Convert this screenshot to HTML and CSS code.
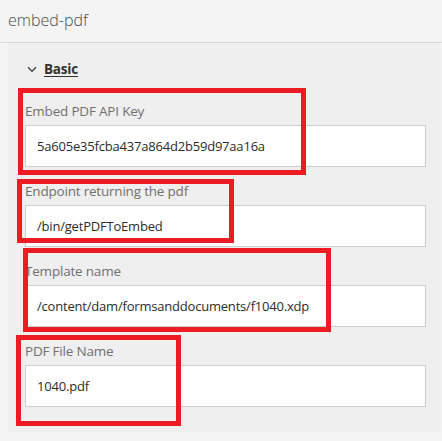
FILE: index.html
```html
<!DOCTYPE html>
<html lang="en">
<head>
<meta charset="utf-8">
<title>embed-pdf</title>
<link rel="stylesheet" href="styles.css">
</head>
<body>
<div class="page">
  <header class="title">embed-pdf</header>
  <section class="panel">
    <div class="section-head">
      <svg class="chevron" width="10" height="7" viewBox="0 0 10 7" aria-hidden="true"><path d="M1 1.2 L5 5.2 L9 1.2" fill="none" stroke="#4b4b4b" stroke-width="1.5"/></svg>
      <span class="basic">Basic</span>
    </div>
    <div class="field">
      <div class="label">Embed PDF API Key</div>
      <div class="input">5a605e35fcba437a864d2b59d97aa16a</div>
    </div>
    <div class="field">
      <div class="label">Endpoint returning the pdf</div>
      <div class="input">/bin/getPDFToEmbed</div>
    </div>
    <div class="field">
      <div class="label">Template name</div>
      <div class="input">/content/dam/formsanddocuments/f1040.xdp</div>
    </div>
    <div class="field">
      <div class="label">PDF File Name</div>
      <div class="input">1040.pdf</div>
    </div>
  </section>
  <div class="mark mark-1"></div>
  <div class="mark mark-2"></div>
  <div class="mark mark-3"></div>
  <div class="mark mark-4"></div>
</div>
</body>
</html>
```
FILE: styles.css
```css
html, body {
  margin: 0;
  padding: 0;
  background: #f4f4f4;
}
.page {
  position: relative;
  width: 442px;
  height: 441px;
  overflow: hidden;
  font-family: "Open Sans", "Noto Sans", sans-serif;
}
.title {
  height: 43px;
  box-sizing: border-box;
  padding: 10px 0 0 8px;
  font-size: 16px;
  line-height: 20px;
  font-weight: 300;
  color: #4b4b4b;
  border-bottom: 1px solid #d9d9d9;
}
.panel {
  margin-left: 8px;
  width: 433px;
  box-sizing: border-box;
  background: #efefef;
  border-radius: 0 0 4px 4px;
  padding: 16px 15px 13px 17px;
}
.section-head {
  display: flex;
  align-items: center;
  height: 20px;
  margin-bottom: 20px;
}
.chevron {
  margin-left: 2px;
  margin-right: 7px;
}
.basic {
  font-size: 13.5px;
  font-weight: 700;
  color: #323232;
  text-decoration: underline;
  text-underline-offset: 2px;
  letter-spacing: -0.2px;
}
.field {
  margin-bottom: 12px;
}
.label {
  font-size: 13.5px;
  line-height: 20px;
  color: #707070;
  padding-top: 2px;
  margin-bottom: 4px;
  letter-spacing: -0.2px;
}
.input {
  height: 42px;
  box-sizing: border-box;
  border: 1px solid #cdcdcd;
  background: #ffffff;
  padding: 0 11px;
  display: flex;
  align-items: center;
  font-size: 13px;
  color: #2c2c2c;
  letter-spacing: -0.2px;
}
.mark {
  position: absolute;
  border: 5px solid #ed1c24;
  box-sizing: border-box;
}
.mark-1 { left: 18px; top: 88px; width: 288px; height: 87px; }
.mark-2 { left: 17px; top: 179px; width: 217px; height: 64px; }
.mark-3 { left: 23px; top: 248px; width: 308px; height: 84px; }
.mark-4 { left: 16px; top: 335px; width: 165px; height: 91px; }
```
